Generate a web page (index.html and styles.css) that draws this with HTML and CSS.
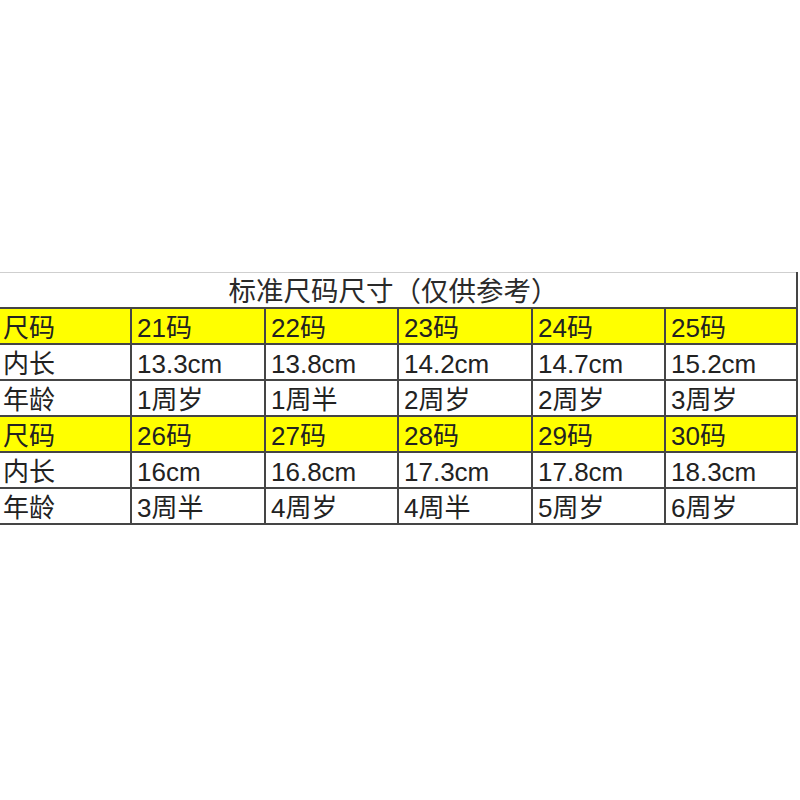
FILE: index.html
```html
<!DOCTYPE html>
<html lang="zh-CN">
<head>
<meta charset="utf-8">
<title>标准尺码尺寸</title>
<link rel="stylesheet" href="styles.css">
</head>
<body>
<div class="page">
  <table class="size-table">
    <colgroup>
      <col class="c1"><col class="c2"><col class="c3"><col class="c4"><col class="c5"><col class="c6">
    </colgroup>
    <tr class="title-row"><td colspan="6">标准尺码尺寸（仅供参考）</td></tr>
    <tr class="hl"><td>尺码</td><td>21码</td><td>22码</td><td>23码</td><td>24码</td><td>25码</td></tr>
    <tr><td>内长</td><td>13.3cm</td><td>13.8cm</td><td>14.2cm</td><td>14.7cm</td><td>15.2cm</td></tr>
    <tr><td>年龄</td><td>1周岁</td><td>1周半</td><td>2周岁</td><td>2周岁</td><td>3周岁</td></tr>
    <tr class="hl"><td>尺码</td><td>26码</td><td>27码</td><td>28码</td><td>29码</td><td>30码</td></tr>
    <tr><td>内长</td><td>16cm</td><td>16.8cm</td><td>17.3cm</td><td>17.8cm</td><td>18.3cm</td></tr>
    <tr><td>年龄</td><td>3周半</td><td>4周岁</td><td>4周半</td><td>5周岁</td><td>6周岁</td></tr>
  </table>
</div>
</body>
</html>
```

FILE: styles.css
```css
html, body {
  margin: 0;
  padding: 0;
  background: #ffffff;
}
.page {
  width: 800px;
  height: 800px;
  padding-top: 272px;
  box-sizing: border-box;
  overflow: hidden;
}
.size-table {
  border-collapse: collapse;
  table-layout: fixed;
  width: 797px;
  font-family: "Liberation Sans", "Noto Sans CJK SC", sans-serif;
  font-size: 26px;
  color: #222222;
  border-top: 1px solid #cfcfcf;
}
.c1 { width: 131px; }
.c2 { width: 134px; }
.c3 { width: 133px; }
.c4 { width: 134px; }
.c5 { width: 133px; }
.c6 { width: 132px; }
.size-table td {
  height: 35px;
  padding: 5px 0 0 5px;
  line-height: 29px;
  border: 2px solid #454545;
  white-space: nowrap;
  overflow: hidden;
  box-sizing: border-box;
}
.size-table td:first-child {
  border-left: none;
  padding-left: 3px;
}
.title-row td {
  text-align: center;
  padding: 3px 12px 0 0;
  font-size: 27.5px;
  border-top: 1px solid #cfcfcf;
  color: #2a2a2a;
}
.hl td {
  background: #ffff00;
}
```
